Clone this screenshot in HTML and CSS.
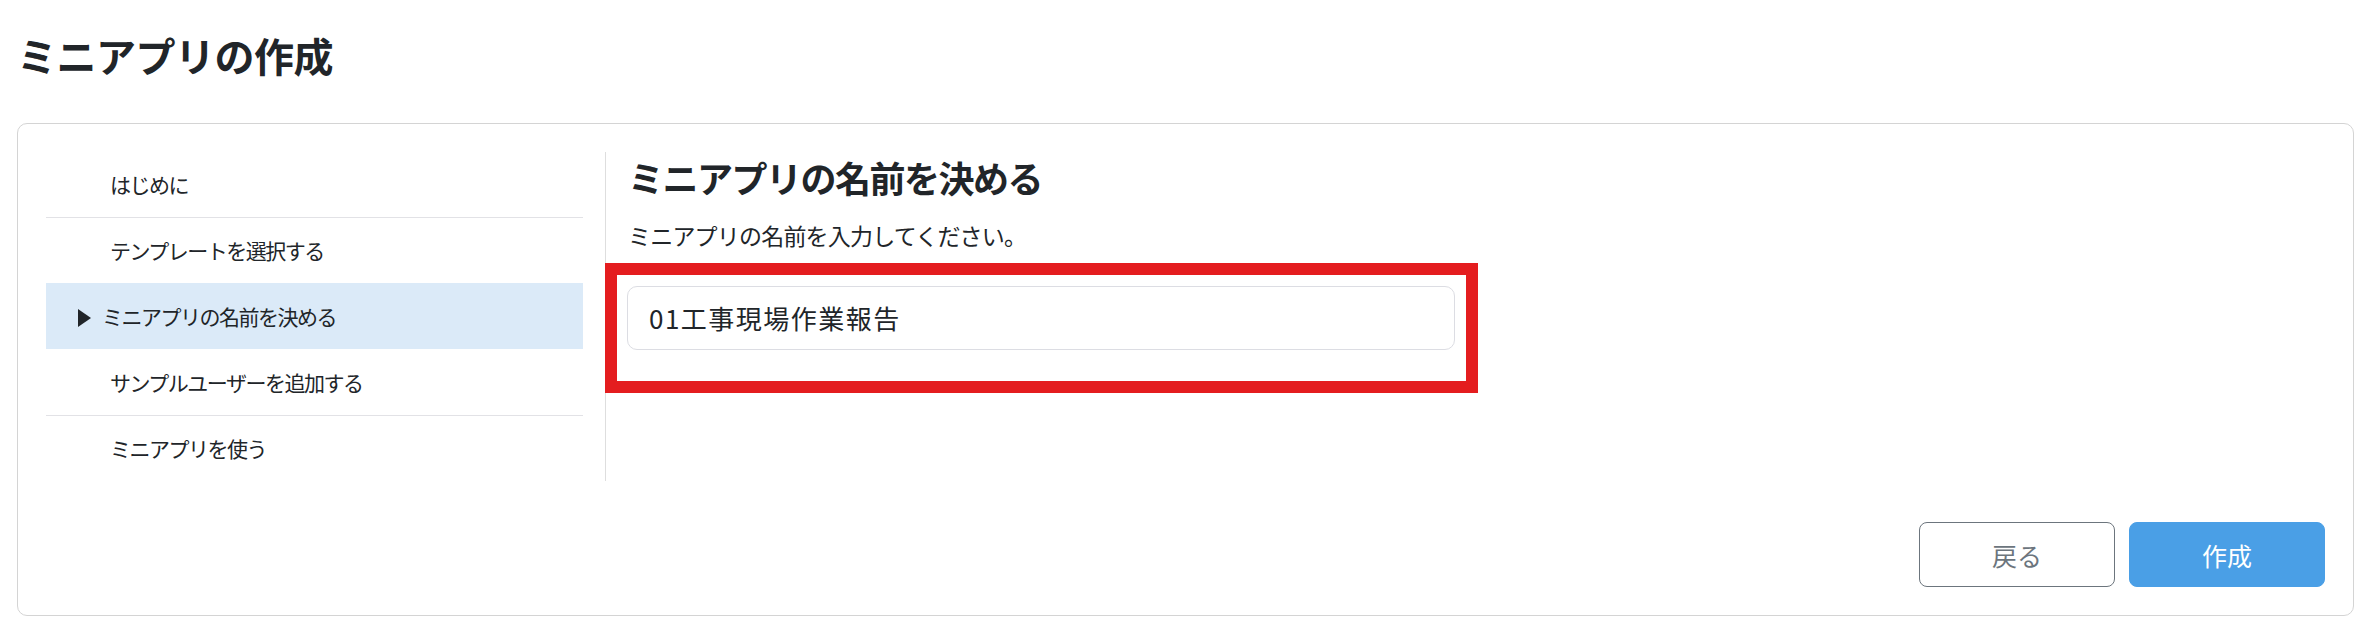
FILE: index.html
```html
<!DOCTYPE html>
<html lang="ja">
<head>
    <meta charset="UTF-8">
    <meta name="viewport" content="width=device-width, initial-scale=1.0">
    <title>ミニアプリの作成</title>
    <link rel="stylesheet" href="styles.css">
</head>
<body>
    <div class="page">
        <h1 class="page-title">ミニアプリの作成</h1>
        <div class="card">
            <div class="card-body">
                <ul class="steps">
                    <li class="step">はじめに</li>
                    <li class="step">テンプレートを選択する</li>
                    <li class="step active">ミニアプリの名前を決める</li>
                    <li class="step">サンプルユーザーを追加する</li>
                    <li class="step">ミニアプリを使う</li>
                </ul>
                <div class="content">
                    <h2>ミニアプリの名前を決める</h2>
                    <p class="lead">ミニアプリの名前を入力してください。</p>
                    <div class="name-field">01工事現場作業報告</div>
                    <!-- annotation frame around the name input -->
                    <div class="highlight"></div>
                </div>
            </div>
            <div class="card-footer">
                <button class="btn btn-outline">戻る</button>
                <button class="btn btn-primary">作成</button>
            </div>
        </div>
    </div>
</body>
</html>
```

FILE: styles.css
```css
body {
    margin: 0;
    font-family: "Noto Sans CJK JP", "Noto Sans", sans-serif;
    color: #212529;
    background: #fff;
}
.page {
    padding: 0 12px 0 17px;
}
.page-title {
    margin: 0;
    padding-top: 28px;
    font-size: 40px;
    font-weight: 700;
    line-height: 54px;
    letter-spacing: -0.5px;
}
.card {
    margin-top: 41px;
    border: 1px solid #d4d4d4;
    border-radius: 10px;
    padding: 28px;
}
.card-body {
    display: flex;
}
.steps {
    list-style: none;
    margin: 0 22px 0 0;
    padding: 0;
    width: 537px;
    flex: none;
}
.step {
    font-size: 21px;
    line-height: 65px;
    letter-spacing: -1.5px;
    padding-left: 64px;
    border-top: 1px solid #e2e2e6;
}
.step:first-child {
    border-top: none;
}
.step.active {
    background: #dbeaf8;
    border-top-color: transparent;
    padding-left: 32px;
}
.step.active + .step {
    border-top-color: transparent;
}
.step.active::before {
    content: "";
    display: inline-block;
    vertical-align: middle;
    margin: -3px 11px 0 0;
    border-left: 13px solid #212529;
    border-top: 9px solid transparent;
    border-bottom: 9px solid transparent;
}
.content {
    flex: 1;
    position: relative;
    border-left: 1px solid #dedede;
    padding-left: 22px;
}
.content h2 {
    margin: 1px 0 0;
    font-size: 36px;
    font-weight: 700;
    line-height: 48px;
    letter-spacing: -1.5px;
}
.lead {
    margin: 17px 0 0;
    font-size: 23px;
    line-height: 34px;
    letter-spacing: -0.8px;
}
.name-field {
    margin: 34px 0 0 -1px;
    width: 828px;
    height: 64px;
    box-sizing: border-box;
    border: 1px solid #dcdde3;
    border-radius: 10px;
    padding-left: 21px;
    font-size: 26px;
    line-height: 62px;
    letter-spacing: 1.5px;
}
.highlight {
    position: absolute;
    left: -1px;
    top: 111px;
    width: 873px;
    height: 130px;
    box-sizing: border-box;
    border: 12px solid #e41d1f;
    pointer-events: none;
}
.card-footer {
    display: flex;
    justify-content: flex-end;
    gap: 14px;
    margin-top: 41px;
}
.btn {
    width: 196px;
    height: 65px;
    border: 1px solid;
    border-radius: 8px;
    font-family: inherit;
    font-size: 25px;
}
.btn-outline {
    background: #fff;
    border-color: #6c757d;
    color: #6c757d;
}
.btn-primary {
    background: #4a9fe6;
    border-color: #4a9fe6;
    color: #fff;
}
```
